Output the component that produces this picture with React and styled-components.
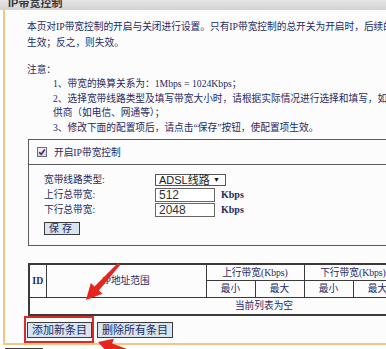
import React from "react";
import styled, { createGlobalStyle } from "styled-components";

const GlobalStyle = createGlobalStyle`
  html, body {
    margin: 0;
    padding: 0;
    background: #ffffff;
  }
`;

const SONG = `"Liberation Serif", "Noto Sans CJK SC", serif`;
const SANS = `"Liberation Sans", "Noto Sans CJK SC", sans-serif`;
const INK = "#1c2a63";
const ORANGE = "#f2c585";

const Root = styled.div`
  position: relative;
  width: 386px;
  height: 349px;
  overflow: hidden;
  background: #ffffff;
  font-family: ${SONG};
  font-size: 9.7px;
  color: ${INK};
`;

const TitleBar = styled.div`
  height: 10px;
  display: flex;
  align-items: flex-end;
  overflow: hidden;
  padding-left: 8px;
  background: linear-gradient(#e6e6e6, #d2d2d2);
`;

const TitleText = styled.span`
  font-family: ${SANS};
  font-size: 11px;
  font-weight: bold;
  line-height: 14px;
  color: #3a3a3a;
`;

const Panel = styled.div`
  width: 600px;
  margin-left: 3px;
  border-left: 2px solid ${ORANGE};
  border-bottom: 2px solid ${ORANGE};
  background: #fcfcfc;
  padding: 9px 0 5px 22px;
`;

const Intro = styled.p`
  margin: 0;
  line-height: 16px;
`;

const NoteTitle = styled.div`
  margin-top: 11px;
  line-height: 15px;
`;

const NoteList = styled.div`
  padding-left: 26px;
  line-height: 14.5px;
`;

const Box = styled.div`
  width: 470px;
  margin: 4px 0 0 1px;
  border: 1px solid #5a5a5a;
`;

const BoxHead = styled.div`
  height: 24px;
  display: flex;
  align-items: center;
  gap: 7px;
  padding-left: 8px;
  border-bottom: 1px solid #5a5a5a;
`;

const Check = styled.span`
  width: 10px;
  height: 10px;
  box-sizing: border-box;
  border: 1px solid #5e6e96;
  background: linear-gradient(#eef2f8, #c9d4e6);
  display: flex;
  align-items: center;
  justify-content: center;
`;

const FormGrid = styled.div`
  display: grid;
  grid-template-columns: 111px auto;
  grid-auto-rows: 15px;
  align-items: center;
  padding: 7px 0 0 15px;
`;

const Label = styled.span`
  line-height: 15px;
`;

const FieldCell = styled.div`
  display: flex;
  align-items: center;
  gap: 6px;
`;

const SelectBox = styled.div`
  width: 71px;
  height: 12px;
  box-sizing: border-box;
  border: 1px solid #555;
  background: #fff;
  display: flex;
  align-items: center;
  justify-content: space-between;
  padding: 0 5px 0 3px;
  font-family: ${SANS};
  font-size: 11px;
  line-height: 10px;
  color: #222;
`;

const Caret = styled.span`
  font-size: 7px;
  color: #111;
`;

const TextInput = styled.input`
  width: 60px;
  height: 14px;
  box-sizing: border-box;
  border: 1px solid #666;
  padding: 0 3px;
  margin: 0;
  font-family: ${SANS};
  font-size: 12px;
  color: #333;
  background: #fff;
  outline: none;
`;

const Unit = styled.span`
  font-family: ${SONG};
  font-size: 10px;
  font-weight: bold;
  color: ${INK};
`;

const Button = styled.button`
  height: ${({ $tall }) => ($tall ? "16px" : "13px")};
  box-sizing: border-box;
  margin: 0;
  padding: 0 4px;
  border: 1px solid #3c3c3c;
  background: #d8e4ef;
  font-family: ${SONG};
  font-size: ${({ $tall }) => ($tall ? "11px" : "10px")};
  line-height: 1;
  color: ${INK};
  letter-spacing: ${({ $spaced }) => ($spaced ? "3px" : "0")};
  cursor: pointer;
`;

const SaveRow = styled.div`
  padding: 5px 0 10px 15px;
  display: flex;
`;

const Table = styled.table`
  width: 470px;
  margin: 17px 0 0 1px;
  border-collapse: collapse;
  table-layout: fixed;
  border: 2px solid #3a3a3a;
`;

const Cell = styled.td`
  border: 1px solid #3a3a3a;
  padding: 0;
  height: ${({ $h }) => $h || 15}px;
  text-align: center;
  font-family: ${SONG};
  font-size: 9.7px;
  color: ${INK};
  line-height: 14px;
  font-weight: ${({ $bold }) => ($bold ? "bold" : "normal")};
`;

const ActionRow = styled.div`
  margin-top: 6px;
  display: flex;
  gap: 5px;
`;

const Marked = styled.div`
  position: relative;
  display: flex;

  &::after {
    content: "";
    position: absolute;
    inset: -6px -2px -5px -3px;
    border: 2px solid #dc2a26;
    pointer-events: none;
  }
`;

const HelpRow = styled.div`
  padding: 3px 0 0 5px;
`;

const Overlay = styled.svg`
  position: absolute;
  left: 0;
  top: 0;
  pointer-events: none;
`;

const cols = [17, 160, 49, 49, 49, 49, 48, 49];

export default function App() {
  return (
    <Root>
      <GlobalStyle />
      <TitleBar>
        <TitleText>IP带宽控制</TitleText>
      </TitleBar>

      <Panel>
        <Intro>
          本页对IP带宽控制的开启与关闭进行设置。只有IP带宽控制的总开关为开启时，后续的设置才能
          <br />
          生效；反之，则失效。
        </Intro>

        <NoteTitle>注意：</NoteTitle>
        <NoteList>
          <div>1、带宽的换算关系为：1Mbps = 1024Kbps；</div>
          <div>2、选择宽带线路类型及填写带宽大小时，请根据实际情况进行选择和填写，如不清楚，请咨询您的带宽提</div>
          <div>供商（如电信、网通等）；</div>
          <div>3、修改下面的配置项后，请点击“保存”按钮，使配置项生效。</div>
        </NoteList>

        <Box>
          <BoxHead>
            <Check>
              <svg width="8" height="8" viewBox="0 0 8 8">
                <path d="M1.2 4.2 L3.2 6.2 L6.8 1.6" fill="none" stroke="#6b1f2a" strokeWidth="1.6" />
              </svg>
            </Check>
            <span>开启IP带宽控制</span>
          </BoxHead>

          <FormGrid>
            <Label>宽带线路类型:</Label>
            <FieldCell>
              <SelectBox>
                <span>ADSL线路</span>
                <Caret>▼</Caret>
              </SelectBox>
            </FieldCell>
            <Label>上行总带宽:</Label>
            <FieldCell>
              <TextInput readOnly value="512" />
              <Unit>Kbps</Unit>
            </FieldCell>
            <Label>下行总带宽:</Label>
            <FieldCell>
              <TextInput readOnly value="2048" />
              <Unit>Kbps</Unit>
            </FieldCell>
          </FormGrid>
          <SaveRow>
            <Button $spaced>保存</Button>
          </SaveRow>
        </Box>

        <Table>
          <colgroup>
            {cols.map((w, i) => (
              <col key={i} style={{ width: w }} />
            ))}
          </colgroup>
          <tbody>
            <tr>
              <Cell rowSpan={2} $bold>ID</Cell>
              <Cell rowSpan={2}>IP地址范围</Cell>
              <Cell colSpan={2}>上行带宽(Kbps)</Cell>
              <Cell colSpan={2}>下行带宽(Kbps)</Cell>
              <Cell rowSpan={2}>启用</Cell>
              <Cell rowSpan={2}>配置</Cell>
            </tr>
            <tr>
              <Cell $h={16}>最小</Cell>
              <Cell $h={16}>最大</Cell>
              <Cell $h={16}>最小</Cell>
              <Cell $h={16}>最大</Cell>
            </tr>
            <tr>
              <Cell colSpan={8} $h={16}>当前列表为空</Cell>
            </tr>
          </tbody>
        </Table>

        <ActionRow>
          <Marked>
            <Button $tall>添加新条目</Button>
          </Marked>
          <Button $tall>删除所有条目</Button>
        </ActionRow>
      </Panel>

      <HelpRow>
        <Button $tall $spaced>帮助</Button>
      </HelpRow>

      <Overlay width="386" height="349" viewBox="0 0 386 349">
        <polygon
          points="120.1,265 98.9,290.4 102.6,293.8 86,300 90.8,283 94.5,286.4 117.9,263"
          fill="#e5261f"
        />
        <polygon
          points="132.6,351.1 112.2,343.4 113.8,338.7 98,342 108.8,353.9 110.4,349.2 131.4,354.9"
          fill="#e5261f"
        />
      </Overlay>
    </Root>
  );
}
